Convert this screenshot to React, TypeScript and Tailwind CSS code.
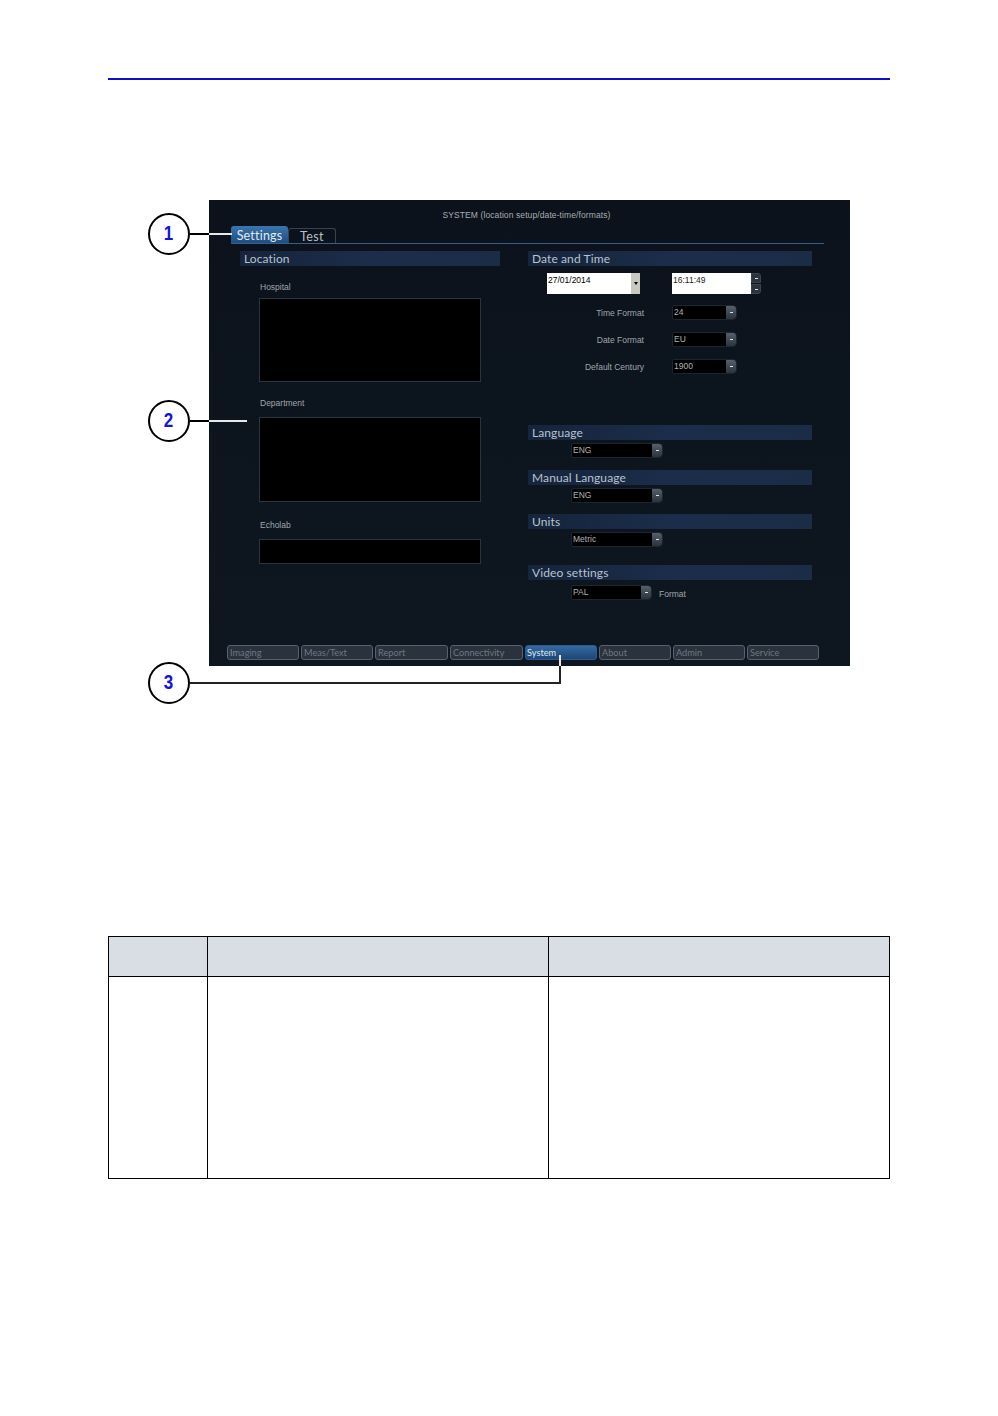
import React from "react";

const uiFont = "font-['Lato',sans-serif]";
const smallFont = "font-['Liberation_Sans',Arial,sans-serif]";

function SectionHeader({ title }: { title: string }) {
  return (
    <div className={`h-[15px] bg-gradient-to-r from-[#16243c] via-[#1b2d4a] to-[#1b2c47] pl-1 text-[12px] leading-[16px] tracking-[0.1px] text-[#b9c3ce] ${uiFont}`}>
      {title}
    </div>
  );
}

function Select({ value, width }: { value: string; width: string }) {
  return (
    <div className={`flex h-[15px] ${width} overflow-hidden rounded-r-[4px] rounded-l-[2px] border border-[#1d2630] bg-black`}>
      <div className={`flex-1 pl-[1px] text-[8.5px] leading-[13px] text-[#aeb2b6] ${smallFont}`}>{value}</div>
      <div className="flex w-[10px] items-center justify-center bg-gradient-to-b from-[#55606b] to-[#2b343e]">
        <div className="h-[1px] w-[3px] bg-[#e4e4e4]" />
      </div>
    </div>
  );
}

function FormatRow({ label, value, className }: { label: string; value: string; className: string }) {
  return (
    <div className={`flex items-center ${className}`}>
      <div className={`mt-[2px] w-[116px] text-right text-[8.5px] text-[#a0a6ac] ${smallFont}`}>{label}</div>
      <div className="ml-[28px]">
        <Select value={value} width="w-[65px]" />
      </div>
    </div>
  );
}

function BottomTab({ label, active, width }: { label: string; active?: boolean; width: string }) {
  return (
    <div
      className={`h-[15px] ${width} rounded-[3px] border text-[9.2px] leading-[14px] ${uiFont} ${
        active
          ? "border-[#2a5b92] bg-gradient-to-b from-[#356aa3] to-[#1e4674] pl-[1px] text-[#dfe8f2]"
          : "border-[#59626c] bg-[#29323d] pl-[2px] text-[#6f7882]"
      }`}
    >
      {label}
    </div>
  );
}

function Callout({ n, className }: { n: number; className: string }) {
  return (
    <div
      className={`absolute flex h-[42px] w-[42px] items-center justify-center rounded-full border-2 border-black bg-white text-[20px] font-bold text-[#1414d8] ${smallFont} ${className}`}
    >
      <span className="-mt-[2px] scale-x-[0.85]">{n}</span>
    </div>
  );
}

export default function App() {
  return (
    <div className="relative h-[1416px] w-[998px] overflow-hidden bg-white">
      <div className="ml-[108px] mt-[78px] h-[2px] w-[782px] bg-[#1010c8]" />

      {/* ultrasound system screen */}
      <div className="ml-[209px] mt-[120px] flex h-[466px] w-[641px] flex-col bg-gradient-to-b from-[#0b121b] to-[#0e1720]">
        <div className={`pt-[10px] pr-[6px] text-center text-[8.5px] leading-[11px] tracking-[0.1px] text-[#a8acb1] ${smallFont}`}>
          SYSTEM (location setup/date-time/formats)
        </div>

        <div className="ml-[22px] mt-[5px] flex h-[18px] w-[593px] items-end border-b border-[#30618f]">
          <div className={`h-[17px] w-[57px] rounded-t-[3px] bg-gradient-to-b from-[#3a76ad] to-[#1f4d80] text-center text-[12.5px] leading-[19px] tracking-[0.2px] text-[#e2eaf2] ${uiFont}`}>
            Settings
          </div>
          <div className={`h-[15px] w-[48px] rounded-t-[3px] border-x border-t border-[#3a424c] text-center text-[12.5px] leading-[16px] tracking-[0.4px] text-[#b9c0c7] ${uiFont}`}>
            Test
          </div>
        </div>

        <div className="mt-[7px] flex flex-1 items-start">
          {/* Location column */}
          <div className="ml-[31px] w-[260px]">
            <SectionHeader title="Location" />
            <div className={`ml-[19px] text-[8.5px] text-[#a0a6ac] ${smallFont}`}>
              <div className="mt-[16px] h-[16px] pl-[1px] leading-[11px]">Hospital</div>
              <div className="h-[84px] w-[222px] border border-[#2c333c] bg-black" />
              <div className="mt-[16px] h-[19px] pl-[1px] leading-[11px]">Department</div>
              <div className="h-[85px] w-[222px] border border-[#2c333c] bg-black" />
              <div className="mt-[18px] h-[19px] pl-[1px] leading-[11px]">Echolab</div>
              <div className="h-[25px] w-[222px] border border-[#2c333c] bg-black" />
            </div>
          </div>

          {/* Date, language, units, video column */}
          <div className="ml-[28px] w-[284px]">
            <SectionHeader title="Date and Time" />

            <div className="mt-[7px] flex">
              <div className="ml-[19px] flex h-[21px] w-[93px] bg-white">
                <div className={`flex-1 pl-[1px] text-[8.5px] leading-[14px] text-black ${smallFont}`}>27/01/2014</div>
                <div className="flex w-[9px] items-center justify-center bg-[#c9c9c2]">
                  <div className="h-0 w-0 border-x-[2px] border-t-[3px] border-x-transparent border-t-black" />
                </div>
              </div>
              <div className="ml-[32px] flex h-[21px] w-[89px]">
                <div className={`w-[79px] bg-white pl-[1px] text-[8.5px] leading-[14px] text-[#222] ${smallFont}`}>16:11:49</div>
                <div className="flex w-[10px] flex-col gap-[1px]">
                  <div className="flex flex-1 items-center justify-center rounded-tr-[3px] border border-[#3a444f] bg-[#2b343e]">
                    <div className="h-[1px] w-[3px] bg-[#e4e4e4]" />
                  </div>
                  <div className="flex flex-1 items-center justify-center rounded-br-[3px] border border-[#3a444f] bg-[#2b343e]">
                    <div className="h-[1px] w-[3px] bg-[#e4e4e4]" />
                  </div>
                </div>
              </div>
            </div>

            <FormatRow label="Time Format" value="24" className="mt-[11px]" />
            <FormatRow label="Date Format" value="EU" className="mt-[12px]" />
            <FormatRow label="Default Century" value="1900" className="mt-[12px]" />

            <div className="mt-[51px]">
              <SectionHeader title="Language" />
            </div>
            <div className="ml-[43px] mt-[3px]">
              <Select value="ENG" width="w-[92px]" />
            </div>

            <div className="mt-[12px]">
              <SectionHeader title="Manual Language" />
            </div>
            <div className="ml-[43px] mt-[3px]">
              <Select value="ENG" width="w-[92px]" />
            </div>

            <div className="mt-[11px]">
              <SectionHeader title="Units" />
            </div>
            <div className="ml-[43px] mt-[3px]">
              <Select value="Metric" width="w-[92px]" />
            </div>

            <div className="mt-[18px]">
              <SectionHeader title="Video settings" />
            </div>
            <div className="ml-[43px] mt-[5px] flex items-center">
              <Select value="PAL" width="w-[81px]" />
              <div className={`ml-[7px] mt-[3px] text-[8.5px] text-[#a0a6ac] ${smallFont}`}>Format</div>
            </div>
          </div>
        </div>

        <div className="mb-[6px] ml-[18px] flex gap-[2px]">
          <BottomTab label="Imaging" width="w-[72px]" />
          <BottomTab label="Meas/Text" width="w-[72px]" />
          <BottomTab label="Report" width="w-[73px]" />
          <BottomTab label="Connectivity" width="w-[73px]" />
          <BottomTab label="System" active width="w-[72px]" />
          <BottomTab label="About" width="w-[72px]" />
          <BottomTab label="Admin" width="w-[72px]" />
          <BottomTab label="Service" width="w-[72px]" />
        </div>
      </div>

      {/* table */}
      <div className="ml-[108px] mt-[270px] grid w-[782px] grid-cols-[99px_341px_341px] border-l border-t border-black">
        <div className="h-[40px] border-b border-r border-black bg-[#d8dee3]" />
        <div className="h-[40px] border-b border-r border-black bg-[#d8dee3]" />
        <div className="h-[40px] border-b border-r border-black bg-[#d8dee3]" />
        <div className="h-[202px] border-b border-r border-black" />
        <div className="h-[202px] border-b border-r border-black" />
        <div className="h-[202px] border-b border-r border-black" />
      </div>

      {/* callouts over the screen */}
      <Callout n={1} className="left-[148px] top-[213px]" />
      <div className="absolute left-[190px] top-[233px] h-[2px] w-[19px] bg-black" />
      <div className="absolute left-[209px] top-[233px] h-[2px] w-[23px] bg-[#e8e8e8]" />

      <Callout n={2} className="left-[148px] top-[400px]" />
      <div className="absolute left-[190px] top-[420px] h-[2px] w-[19px] bg-black" />
      <div className="absolute left-[209px] top-[420px] h-[2px] w-[38px] bg-[#e8e8e8]" />

      <Callout n={3} className="left-[148px] top-[662px]" />
      <div className="absolute left-[190px] top-[682px] h-[2px] w-[371px] bg-[#222]" />
      <div className="absolute left-[559px] top-[666px] h-[17px] w-[2px] bg-[#222]" />
      <div className="absolute left-[559px] top-[655px] h-[11px] w-[2px] bg-[#e8e8e8]" />
    </div>
  );
}
